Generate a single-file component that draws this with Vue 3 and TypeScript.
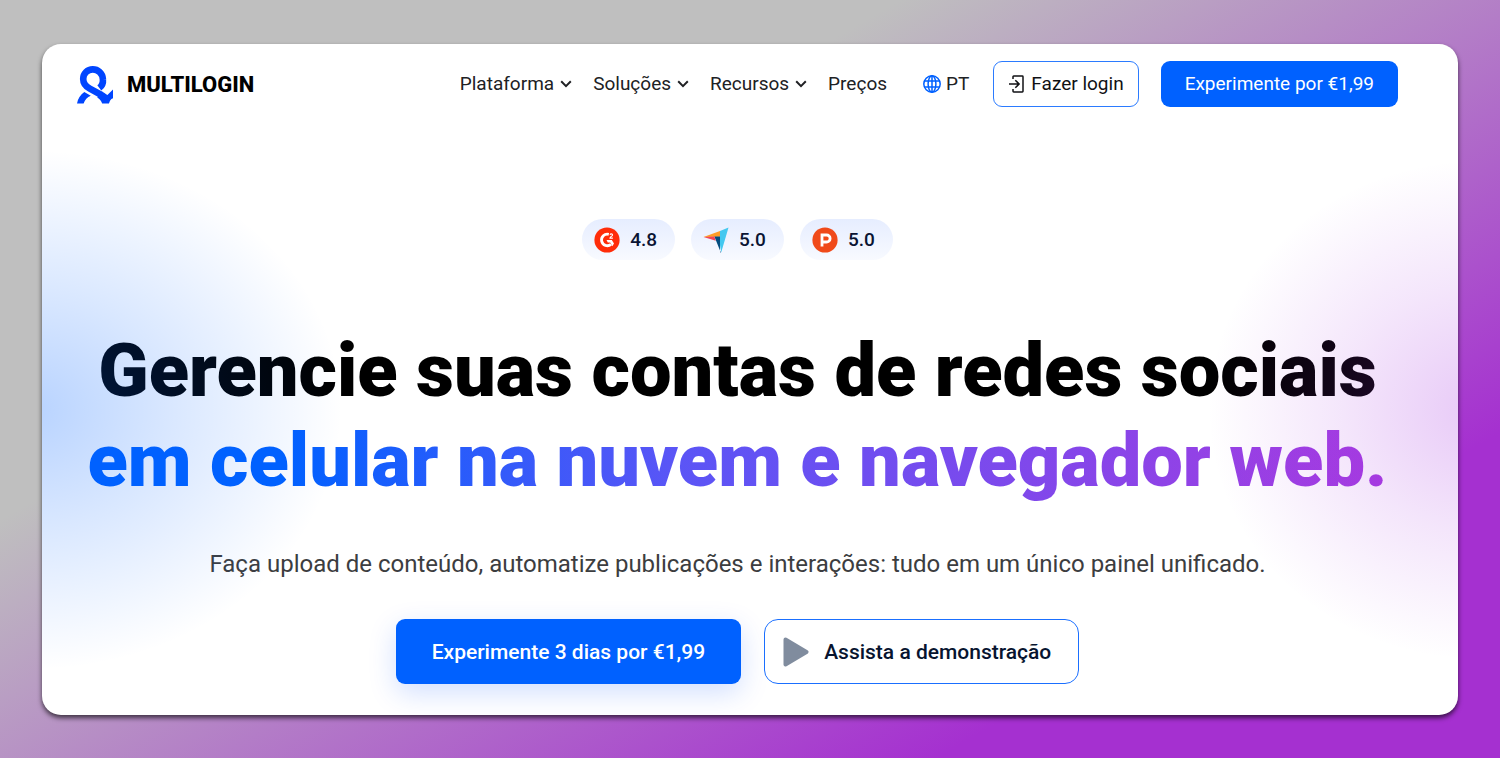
<script setup lang="ts">
interface NavItem {
  label: string
  menu: boolean
}

interface Rating {
  id: 'g2' | 'capterra' | 'producthunt'
  name: string
  score: string
}

const navItems: NavItem[] = [
  { label: 'Plataforma', menu: true },
  { label: 'Soluções', menu: true },
  { label: 'Recursos', menu: true },
  { label: 'Preços', menu: false },
]

const ratings: Rating[] = [
  { id: 'g2', name: 'G2', score: '4.8' },
  { id: 'capterra', name: 'Capterra', score: '5.0' },
  { id: 'producthunt', name: 'Product Hunt', score: '5.0' },
]
</script>

<template>
  <div class="backdrop">
    <div class="card">
      <header class="header">
        <a class="brand" href="#">
          <svg class="brand-mark" viewBox="0 0 36 38" aria-hidden="true">
            <path
              d="M22.3 21.9C25.4 19.6 26.2 16.4 25.9 13.2C25.5 7 20.8 3.4 15.8 3.4C10.4 3.4 6.2 7.3 6.2 12.9C6.2 17.7 9 20.5 12.8 22.6L24.5 29C26.5 30 27.5 31.2 28.3 32.5"
              fill="none"
              stroke="#0045ff"
              stroke-width="6.6"
            />
            <path d="M36 23.4V32.2C33.5 33 32.8 35 32 37.5H25.2C24 34.7 22.8 33.1 20.3 31.6L23.5 26L30.4 28.9Z" fill="#0045ff" />
            <path d="M7.3 26.1L13.8 29.7C10.2 31.1 7.9 33.6 6.6 37.5H0C.9 32.8 3.4 29 7.3 26.1Z" fill="#0045ff" />
          </svg>
          <span class="brand-name">MULTILOGIN</span>
        </a>

        <nav class="nav">
          <template v-for="item in navItems" :key="item.label">
            <button v-if="item.menu" class="nav-item" type="button">
              {{ item.label }}
              <svg class="chevron" viewBox="0 0 12 8" aria-hidden="true">
                <path d="M1.2 1.3L6 6.1L10.8 1.3" fill="none" stroke="currentColor" stroke-width="2" />
              </svg>
            </button>
            <a v-else class="nav-item" href="#">{{ item.label }}</a>
          </template>
        </nav>

        <button class="language" type="button">
          <svg class="globe" viewBox="0 0 18 18" fill="none" stroke="#0061ff" stroke-width="1.5" aria-hidden="true">
            <circle cx="9" cy="9" r="8.2" />
            <ellipse cx="9" cy="9" rx="3.9" ry="8.2" />
            <path d="M1.5 6.1H16.5M1.5 11.9H16.5M9 1V17" />
          </svg>
          PT
        </button>

        <a class="login" href="#">
          <svg class="login-icon" viewBox="0 0 15 18" fill="none" stroke="currentColor" stroke-width="1.5" aria-hidden="true">
            <path d="M4 4V1.7Q4 1 4.7 1H13.3Q14 1 14 1.7V16.3Q14 17 13.3 17H4.7Q4 17 4 16.3V14" />
            <path d="M0 9H9.8M6.3 5.2L10.1 9L6.3 12.8" />
          </svg>
          Fazer login
        </a>
        <a class="trial" href="#">Experimente por €1,99</a>
      </header>

      <main class="hero">
        <ul class="ratings">
          <li v-for="rating in ratings" :key="rating.id" class="rating">
            <svg v-if="rating.id === 'g2'" class="rating-icon" viewBox="0 0 26 26" role="img" :aria-label="rating.name">
              <circle cx="13" cy="13" r="12.6" fill="#ff2d0a" />
              <path d="M14.8 7.3A5.8 5.8 0 1 0 17 17.4" fill="none" stroke="#fff" stroke-width="2.8" />
              <path d="M12.5 13H17.8L20 16.4L18.3 19.2L16.2 15.6H13.8Z" fill="#fff" />
              <path d="M16 7.8Q16.3 6.9 17.3 6.9Q18.6 6.9 18.6 8Q18.6 8.8 17.2 9.4Q16.1 10 16 11.1H18.9" fill="none" stroke="#fff" stroke-width="1.1" />
            </svg>
            <svg v-else-if="rating.id === 'capterra'" class="rating-icon" viewBox="0 0 26 26" role="img" :aria-label="rating.name">
              <path d="M.5 10L17 4.1V9.8Z" fill="#ff9d28" />
              <path d="M17 4.1L25.5 .5L18.2 25.5L17 18Z" fill="#43c8f0" />
              <path d="M17 9.5V25.5H17.8L11.4 9.5Z" fill="#044d80" />
              <path d="M.5 10L11.4 9.5L12.8 13.7Z" fill="#f0465a" />
            </svg>
            <svg v-else class="rating-icon" viewBox="0 0 26 26" role="img" :aria-label="rating.name">
              <circle cx="13" cy="13" r="12.6" fill="#f04a1a" />
              <path d="M10 19.5V8H14.6A3.5 3.5 0 0 1 14.6 15H10" fill="none" stroke="#fff" stroke-width="2.8" />
            </svg>
            {{ rating.score }}
          </li>
        </ul>

        <h1 class="title">
          Gerencie suas contas de redes sociais
          <span class="title-accent">em celular na nuvem e navegador web.</span>
        </h1>

        <p class="lead">Faça upload de conteúdo, automatize publicações e interações: tudo em um único painel unificado.</p>

        <div class="actions">
          <a class="action action-primary" href="#">Experimente 3 dias por €1,99</a>
          <button class="action action-demo" type="button">
            <svg class="play" viewBox="0 0 26 30" aria-hidden="true">
              <path d="M2.5 2.5L23.5 15L2.5 27.5Z" fill="#808c9e" stroke="#808c9e" stroke-width="4" stroke-linejoin="round" />
            </svg>
            Assista a demonstração
          </button>
        </div>
      </main>
    </div>
  </div>
</template>

<style>
body {
  margin: 0;
}
</style>

<style scoped>
.backdrop {
  box-sizing: border-box;
  display: flex;
  min-height: 100vh;
  padding: 44px 42px 43px;
  background: linear-gradient(150deg, #bfbfbf 32%, #a530d0 80%);
  font-family: Roboto, "Liberation Sans", sans-serif;
}

.card {
  position: relative;
  box-sizing: border-box;
  flex: 1;
  min-width: 0;
  padding: 17px 60px 30px 35px;
  overflow: hidden;
  border-radius: 19px;
  background: #fff;
  box-shadow: 0 3px 5px rgba(0, 0, 0, 0.65);
}

/* Coloured glows washing over the edges of the card and its text */
.card::after {
  content: "";
  position: absolute;
  inset: 0;
  pointer-events: none;
  background:
    radial-gradient(ellipse 310px 260px at -10px 366px, rgba(0, 97, 255, 0.28), rgba(0, 97, 255, 0.15) 45%, rgba(0, 97, 255, 0) 100%),
    radial-gradient(ellipse 270px 250px at calc(100% + 20px) 366px, rgba(165, 48, 224, 0.26), rgba(165, 48, 224, 0.12) 50%, rgba(165, 48, 224, 0) 100%);
}

a,
button {
  color: inherit;
  font: inherit;
  text-decoration: none;
}

button {
  margin: 0;
  padding: 0;
  border: 0;
  background: none;
  cursor: pointer;
}

.header {
  display: flex;
  align-items: center;
  height: 46px;
  color: #202124;
  font-size: 19px;
  line-height: 24px;
  white-space: nowrap;
}

.brand {
  display: flex;
  align-items: center;
  gap: 14px;
  margin-right: auto;
  padding-top: 2px;
  color: #000;
}

.brand-mark {
  width: 36px;
  height: 38px;
}

.brand-name {
  font-size: 22px;
  font-weight: 800;
}

.nav {
  display: flex;
  gap: 21px;
}

.nav-item {
  display: flex;
  align-items: center;
  gap: 6px;
}

.chevron {
  width: 12px;
  height: 8px;
}

.language {
  display: flex;
  align-items: center;
  gap: 5px;
  margin-left: 36px;
}

.globe {
  width: 18px;
  height: 18px;
}

.login,
.trial {
  box-sizing: border-box;
  display: flex;
  align-items: center;
  height: 46px;
  border-radius: 9px;
}

.login {
  gap: 7px;
  margin-left: 24px;
  padding: 0 14px 0 15px;
  border: 1px solid #2b7bff;
  color: #101114;
}

.login-icon {
  width: 15px;
  height: 18px;
}

.trial {
  margin-left: 22px;
  padding: 0 24px;
  background: #0061ff;
  color: #fff;
}

.hero {
  display: flex;
  flex-direction: column;
  align-items: center;
  padding-top: 112px;
}

.ratings {
  display: flex;
  gap: 16px;
  margin: 0;
  padding: 0;
  list-style: none;
}

.rating {
  display: flex;
  align-items: center;
  gap: 10px;
  box-sizing: border-box;
  height: 41px;
  padding: 0 18px 0 12px;
  border-radius: 21px;
  background: linear-gradient(#e6edff, #f8faff);
  color: #0a1433;
  font-size: 19px;
  font-weight: 500;
}

.rating-icon {
  width: 26px;
  height: 26px;
}

.title {
  margin: 66px 0 0;
  color: #000;
  font-size: 74px;
  font-weight: 900;
  line-height: 90px;
  text-align: center;
  white-space: nowrap;
}

.title-accent {
  display: block;
  background: linear-gradient(90deg, #0061ff 15%, #5a55f6 45%, #a63be0);
  background-clip: text;
  -webkit-background-clip: text;
  color: transparent;
}

.lead {
  margin: 43px 0 0;
  color: #3c3d40;
  font-size: 24px;
  line-height: 30px;
  text-align: center;
}

.actions {
  display: flex;
  gap: 23px;
  margin-top: 40px;
}

.action {
  box-sizing: border-box;
  display: flex;
  align-items: center;
  height: 65px;
  font-size: 21px;
  font-weight: 500;
  white-space: nowrap;
}

.action-primary {
  padding: 0 36px;
  border-radius: 9px;
  background: #0061ff;
  box-shadow: 0 9px 28px rgba(0, 80, 255, 0.18);
  color: #fff;
}

.action-demo {
  gap: 15px;
  padding: 0 27px 0 18px;
  border: 1px solid #1a6fff;
  border-radius: 14px;
  background: #fff;
  color: #07142f;
}

.play {
  width: 26px;
  height: 30px;
}
</style>
